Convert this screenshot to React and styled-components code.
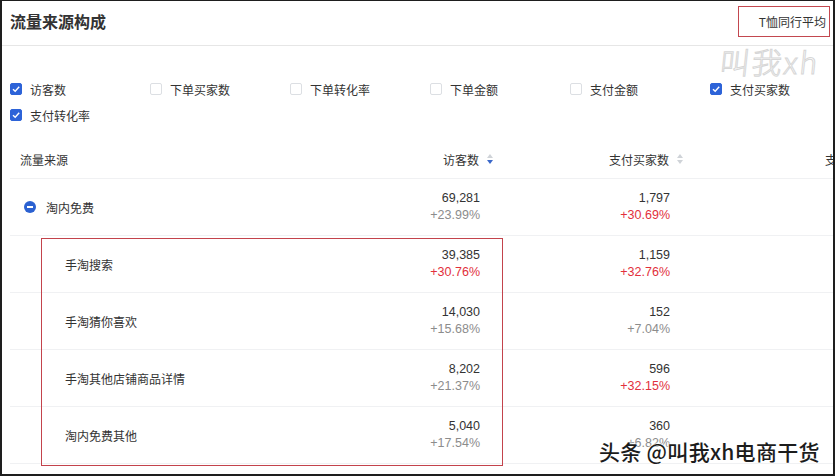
import styled, { createGlobalStyle } from "styled-components";

const GlobalStyle = createGlobalStyle`
	html, body {
		margin: 0;
		padding: 0;
		background: #ffffff;
	}
	body {
		font-family: "Noto Sans CJK SC", "Liberation Sans", sans-serif;
		color: #333333;
	}
`;

const filters = [
	{ label: "访客数", checked: true },
	{ label: "下单买家数", checked: false },
	{ label: "下单转化率", checked: false },
	{ label: "下单金额", checked: false },
	{ label: "支付金额", checked: false },
	{ label: "支付买家数", checked: true },
	{ label: "支付转化率", checked: true },
];

const rows = [
	{ name: "手淘搜索", visitors: "39,385", visitorsRate: "+30.76%", visitorsUp: true, buyers: "1,159", buyersRate: "+32.76%", buyersUp: true },
	{ name: "手淘猜你喜欢", visitors: "14,030", visitorsRate: "+15.68%", visitorsUp: false, buyers: "152", buyersRate: "+7.04%", buyersUp: false },
	{ name: "手淘其他店铺商品详情", visitors: "8,202", visitorsRate: "+21.37%", visitorsUp: false, buyers: "596", buyersRate: "+32.15%", buyersUp: true },
	{ name: "淘内免费其他", visitors: "5,040", visitorsRate: "+17.54%", visitorsUp: false, buyers: "360", buyersRate: "+6.82%", buyersUp: false },
];

function SortIcon({ active }) {
	return (
		<svg width="6" height="10" viewBox="0 0 6 10">
			<path d="M3 0 L6 4 L0 4 Z" fill="#cfd3d8" />
			<path d="M3 10 L6 6 L0 6 Z" fill={active ? "#3b68c9" : "#cfd3d8"} />
		</svg>
	);
}

function Check() {
	return (
		<svg width="10" height="10" viewBox="0 0 10 10">
			<path d="M2 5.2 L4.2 7.3 L8.2 2.8" fill="none" stroke="#ffffff" strokeWidth="1.4" />
		</svg>
	);
}

function Metric({ value, rate, up }) {
	return (
		<NumCell>
			<Value>{value}</Value>
			<Rate $up={up}>{rate}</Rate>
		</NumCell>
	);
}

export default function App() {
	return (
		<Page>
			<GlobalStyle />
			<Header>
				<Title>流量来源构成</Title>
				<Benchmark>T恤同行平均</Benchmark>
			</Header>

			<Filters>
				{filters.map((f) => (
					<FilterItem key={f.label}>
						<Box $checked={f.checked}>{f.checked && <Check />}</Box>
						{f.label}
					</FilterItem>
				))}
			</Filters>

			<Table>
				<HeadRow>
					<HeadName>流量来源</HeadName>
					<HeadCell>
						访客数 <SortIcon active />
					</HeadCell>
					<HeadCell>
						支付买家数 <SortIcon />
					</HeadCell>
					<HeadCell>
						支付转化率 <SortIcon />
					</HeadCell>
				</HeadRow>

				<Row>
					<NameCell>
						<Collapse />
						淘内免费
					</NameCell>
					<Metric value="69,281" rate="+23.99%" />
					<Metric value="1,797" rate="+30.69%" up />
					<NumCell />
				</Row>

				{rows.map((r) => (
					<Row key={r.name}>
						<NameCell $child>{r.name}</NameCell>
						<Metric value={r.visitors} rate={r.visitorsRate} up={r.visitorsUp} />
						<Metric value={r.buyers} rate={r.buyersRate} up={r.buyersUp} />
						<NumCell />
					</Row>
				))}
			</Table>

			<Highlight />
			<MarkTop>叫我xh</MarkTop>
			<MarkBottom>头条 @叫我xh电商干货</MarkBottom>
		</Page>
	);
}

const Page = styled.div`
	position: relative;
	box-sizing: border-box;
	width: 835px;
	height: 476px;
	overflow: hidden;
	background: #ffffff;
	border-top: 1px solid #1e1e1e;
	border-left: 2px solid #1e1e1e;
	border-right: 2px solid #1e1e1e;
	border-bottom: 2px solid #1e1e1e;
`;

const Header = styled.div`
	display: flex;
	align-items: center;
	justify-content: space-between;
	height: 45px;
	padding: 0 3px 4px 8px;
	box-sizing: border-box;
	border-bottom: 1px solid #e6e6e6;
`;

const Title = styled.h2`
	margin: 0;
	font-size: 16px;
	font-weight: 700;
	color: #333333;
`;

const Benchmark = styled.div`
	display: flex;
	align-items: center;
	height: 29px;
	padding: 0 3px 0 20px;
	font-size: 12px;
	color: #333333;
	border: 1px solid #c3474f;
`;

const Filters = styled.div`
	display: grid;
	grid-template-columns: repeat(6, 140px);
	grid-auto-rows: 26px;
	padding: 30px 0 12px 8px;
`;

const FilterItem = styled.label`
	display: flex;
	align-items: center;
	gap: 8px;
	font-size: 12px;
	color: #333333;
`;

const Box = styled.span`
	display: flex;
	align-items: center;
	justify-content: center;
	box-sizing: border-box;
	width: 12px;
	height: 12px;
	border-radius: 2px;
	background: ${(p) => (p.$checked ? "#2d63d8" : "#ffffff")};
	border: 1px solid ${(p) => (p.$checked ? "#2d63d8" : "#dcdfe3")};
`;

const Table = styled.div`
	margin-left: 8px;
`;

const HeadRow = styled.div`
	display: grid;
	grid-template-columns: 291px 200px 190px 216px;
	height: 38px;
	border-bottom: 1px solid #f0f1f3;
`;

const HeadName = styled.div`
	display: flex;
	align-items: center;
	padding-left: 10px;
	font-size: 12px;
	color: #333333;
`;

const HeadCell = styled.div`
	display: flex;
	align-items: center;
	justify-content: flex-end;
	gap: 8px;
	padding-right: 8px;
	font-size: 12px;
	color: #333333;
	white-space: nowrap;
`;

const Row = styled.div`
	display: grid;
	grid-template-columns: 291px 200px 190px 216px;
	height: 57px;
	box-sizing: border-box;
	border-bottom: 1px solid #f0f1f3;
`;

const NameCell = styled.div`
	display: flex;
	align-items: center;
	gap: 10px;
	padding-left: ${(p) => (p.$child ? "55px" : "14px")};
	font-size: 12px;
	color: #333333;
`;

const Collapse = styled.span`
	position: relative;
	width: 12px;
	height: 12px;
	border-radius: 50%;
	background: #2b61d1;

	&::after {
		content: "";
		position: absolute;
		left: 3px;
		top: 5px;
		width: 6px;
		height: 2px;
		background: #ffffff;
	}
`;

const NumCell = styled.div`
	display: flex;
	flex-direction: column;
	justify-content: center;
	align-items: flex-end;
	padding-right: 21px;
	font-family: "Liberation Sans", "Noto Sans CJK SC", sans-serif;
	font-size: 12.5px;
	line-height: 17px;
`;

const Value = styled.span`
	color: #333333;
`;

const Rate = styled.span`
	color: ${(p) => (p.$up ? "#e2303c" : "#8c8c8c")};
`;

const Highlight = styled.div`
	position: absolute;
	left: 39px;
	top: 237px;
	width: 462px;
	height: 228px;
	box-sizing: border-box;
	border: 1.5px solid #c3434c;
	pointer-events: none;
`;

const MarkTop = styled.div`
	position: absolute;
	left: 718px;
	top: 38px;
	font-size: 30px;
	font-weight: 300;
	letter-spacing: 2px;
	color: #ffffff;
	-webkit-text-stroke: 1px #d6d6d6;
	transform: skewX(-6deg);
`;

const MarkBottom = styled.div`
	position: absolute;
	left: 597px;
	top: 435px;
	font-size: 21px;
	font-weight: 500;
	letter-spacing: 0.3px;
	color: #1c1c1c;
	white-space: nowrap;
	text-shadow: 0 0 2px #ffffff, 0 0 2px #ffffff, 0 0 3px #ffffff;
`;
